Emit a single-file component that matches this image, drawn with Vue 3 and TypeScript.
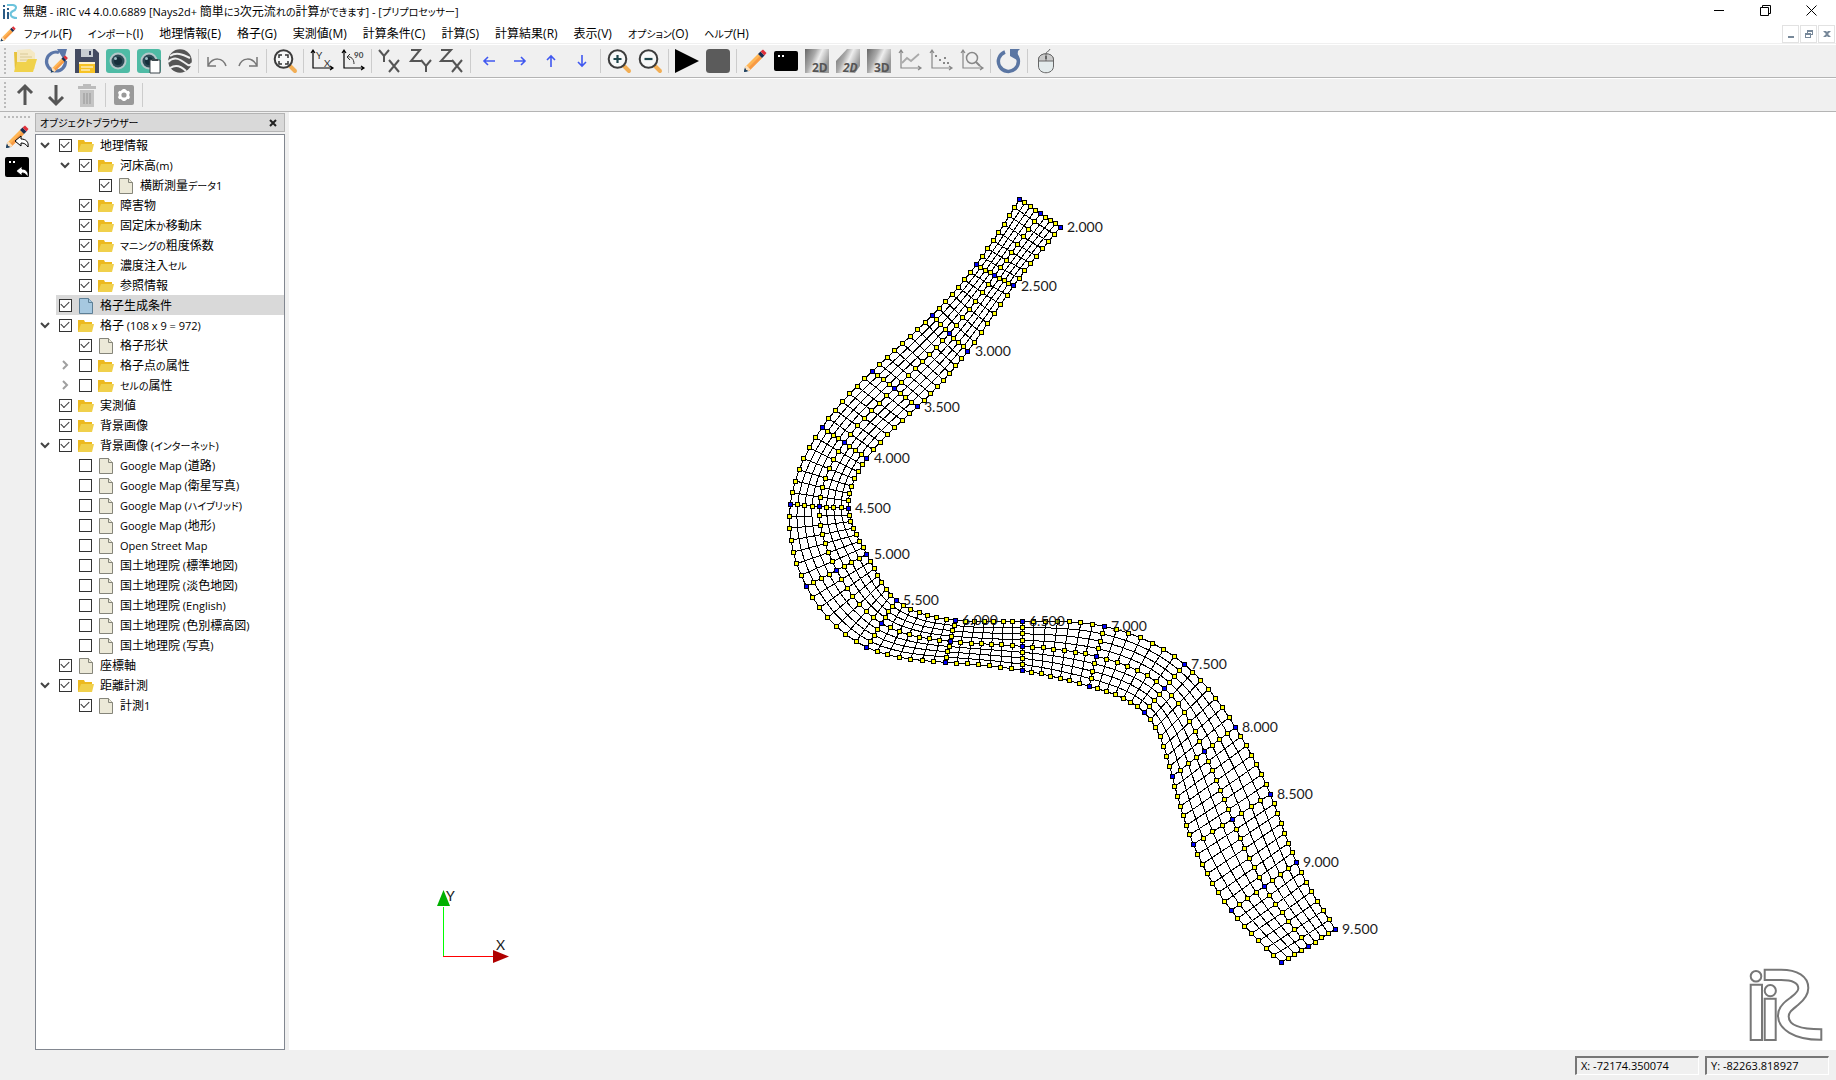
<script setup lang="ts">
import { h, ref } from 'vue'

type Point = [number, number]

interface ToolItem {
  icon: string
  label: string
  disabled?: boolean
}

interface TreeNode {
  label: string
  level: number
  icon: 'folder' | 'file' | 'blue'
  checked: boolean
  expand?: 'open' | 'closed'
  selected?: boolean
}

// Interface text: kana and Latin runs are set smaller than the kanji around them.
const UiText = (props: { text: string }) =>
  h('span', { class: 'ui-text' }, (props.text.match(/[\u3040-\u30ff]+|[\u0000-\u00ff]+|[^\u0000-\u00ff\u3040-\u30ff]+/g) ?? []).map((run) => {
    const kind = /^[\u3040-\u30ff]/.test(run) ? 'kana' : /^[\u0000-\u00ff]/.test(run) ? 'latin' : 'kanji'
    return h('span', { class: kind }, run)
  }))
UiText.props = ['text']

const menus = [
  'ファイル(F)', 'インポート(I)', '地理情報(E)', '格子(G)', '実測値(M)', '計算条件(C)',
  '計算(S)', '計算結果(R)', '表示(V)', 'オプション(O)', 'ヘルプ(H)',
]

const pencil =
  '<path d="M1 23 2 18 6 22Z" fill="#1d3f5e"/><path d="M2 18 15 5 19 9 6 22Z" fill="#ffb655"/><path d="M4 20 17 7 19 9 6 22Z" fill="#f79a45"/><path d="M2 18 3.500 16.500 7.500 20.500 6 22 3 21Z" fill="#fbe0bd"/><path d="M1 23 1.800 19.600 4.400 22.200Z" fill="#1d3f5e"/><path d="M15 5 17.500 2.500 21.500 6.500 19 9Z" fill="#1c2e50"/><path d="M17.500 2.500 20 .5 23.500 4 21.500 6.500Z" fill="#e0303a"/>'
const lens =
  '<path d="M16 16 22 22" stroke="#f2ae55" stroke-width="4" stroke-linecap="round"/><circle cx="10.500" cy="10" r="8.800" fill="#f7f8f8" stroke="#3c3c3c" stroke-width="2"/>'
const axes =
  '<path d="M3 2V19H22M1 4 3 1 5 4M20 17 23 19 20 21" fill="none" stroke="currentColor" stroke-width="1.200"/>'
const metal =
  '<linearGradient id="metal" x1="0" y1="0" x2="1" y2=".45"><stop offset="0" stop-color="#666"/><stop offset=".4" stop-color="#aaa"/><stop offset=".62" stop-color="#eee"/><stop offset="1" stop-color="#999"/></linearGradient>'
const iconText = 'font-family="Open Sans, sans-serif" font-weight="700" font-size="12" fill="#555"'
const camera =
  '<rect width="24" height="24" rx="3" fill="#4fbba5"/><circle cx="12" cy="12" r="8.500" fill="#b6c8ca"/><circle cx="12" cy="12" r="6.500" fill="#2d4a55"/><circle cx="12" cy="12" r="4" fill="#172f3b"/><circle cx="9.500" cy="9.500" r="1.500" fill="#9fc0c6"/>'

const icons: Record<string, string> = {
  open: '<path d="M1 3H9V23H2Z" fill="#e8c33c"/><path d="M4 1 17 0 22 4V20H4Z" fill="#f5e9c4"/><path d="M7 5H15M7 8H19M7 11H19" stroke="#d9ca98"/><path d="M1 23 4 13H13L15 10H24L20 23Z" fill="#f0d24c"/>',
  reload:
    '<path d="M15 3.500A9.500 9.500 0 1 0 21.500 12" fill="none" stroke="#5b76a8" stroke-width="3.200"/><path d="M13 0H23L20 11Z" fill="#5b76a8"/><g transform="translate(6 6) scale(.76)">' + pencil + '</g>',
  save: '<path d="M0 0H20L24 4V24H0Z" fill="#444b61"/><path d="M6 0H18V8H6Z" fill="#c9ced3"/><path d="M14 2H16V6H14Z" fill="#39415a"/><path d="M4 13H20V24H4Z" fill="#f7c325"/><path d="M4 13H20V15H4Z" fill="#fff3ce"/><path d="M6 18H18M6 21H15" stroke="#fff"/>',
  camera,
  paste: camera + '<path d="M13 11H23V24H13Z" fill="#fff" stroke="#3c474c"/><path d="M15 10H21V12H15Z" fill="#3c474c"/>',
  earth:
    '<circle cx="12" cy="12" r="11.800" fill="#555"/><path d="M2 7C8 3 14 5 22 9M0 13C7 6 13 11 20 16 22 17 23 16 24 14M2 19C8 15 13 17 18 22" fill="none" stroke="#f0f0f0" stroke-width="2"/>',
  undo: '<path d="M3 8V17H11M3.500 16C8 8 18 8 21 17" fill="none" stroke="#777" stroke-width="1.500"/>',
  redo: '<path d="M21 8V17H13M20.500 16C16 8 6 8 3 17" fill="none" stroke="#777" stroke-width="1.500"/>',
  fit: lens + '<path d="M6 9V6H9M12 6H15V9M15 12V15H12M9 15H6V12" fill="none" stroke="#333" stroke-width="1.500"/>',
  axisxy: axes + '<text x="6" y="10" font-family="Lato, sans-serif" font-size="10" fill="#333">Y</text><text x="14" y="18" font-family="Lato, sans-serif" font-size="10" fill="#333">X</text>',
  rotate: axes + '<path d="M6 8C10 7 13 10 13 15M9 5 6 8 9 11" fill="none" stroke="#333"/><text x="13" y="9" font-family="Lato, sans-serif" font-size="8" font-weight="700" fill="#444">90</text>',
  yx: '<path d="M1 1 6 7 11 1M6 7V13M11 11 21 23M21 11 11 23" fill="none" stroke="#555" stroke-width="2"/>',
  zy: '<path d="M2 1H11L2 12H12M12 11 17 17 22 11M17 17V23" fill="none" stroke="#555" stroke-width="2"/>',
  zx: '<path d="M1 1H11L1 12H12M12 11 22 23M22 11 12 23" fill="none" stroke="#555" stroke-width="2"/>',
  left: '<path d="M18 12H7M11 8 7 12 11 16" fill="none" stroke="#4058f0" stroke-width="1.600"/>',
  right: '<path d="M6 12H17M13 8 17 12 13 16" fill="none" stroke="#4058f0" stroke-width="1.600"/>',
  up: '<path d="M12 18V7M8 11 12 7 16 11" fill="none" stroke="#4058f0" stroke-width="1.600"/>',
  down: '<path d="M12 6V17M8 13 12 17 16 13" fill="none" stroke="#4058f0" stroke-width="1.600"/>',
  zoomin: lens + '<path d="M10.500 6V14M6.500 10H14.500" stroke="#1f464c" stroke-width="2.200"/>',
  zoomout: lens + '<path d="M6.500 10H14.500" stroke="#1f464c" stroke-width="2.200"/>',
  play: '<path d="M0 0 24 12 0 24Z"/>',
  stop: '<rect width="24" height="24" rx="3.500" fill="#5b5b5b"/>',
  pencil,
  console: '<rect y="2" width="24" height="20" rx="2"/><path d="M4 6H6V8H4ZM8 6H10V8H8Z" fill="#fff"/>',
  flat: metal + '<path d="M0 0H24V24H0Z" fill="url(#metal)"/><text x="7" y="23" ' + iconText + '>2D</text>',
  skew: metal + '<path d="M11 0H24V17L19 24H0V12Z" fill="url(#metal)"/><text x="7" y="23" font-style="italic" ' + iconText + '>2D</text>',
  solid: metal + '<path d="M0 0H24V24H0Z" fill="url(#metal)"/><text x="7" y="23" ' + iconText + '>3D</text>',
  chart: '<g color="#888">' + axes + '</g><path d="M4 14 9 9 13 12 21 5" fill="none" stroke="#aaa" stroke-width="1.800"/>',
  scatter: '<g color="#888">' + axes + '</g><path d="M6 6H8V8H6ZM10 10H12V12H10ZM15 8H17V10H15ZM14 13H16V15H14ZM18 13H20V15H18Z" fill="#888"/>',
  search: '<g color="#888">' + axes + '</g><circle cx="12" cy="9" r="5.500" fill="none" stroke="#888" stroke-width="1.500"/><path d="M16 13 20 17" stroke="#888" stroke-width="2"/>',
  refresh: '<path d="M17.500 4.500A10 10 0 1 1 8 3" fill="none" stroke="#5b76a3" stroke-width="3.500"/><path d="M13 0H23L21 2 20 11 13 7Z" fill="#5b76a3"/>',
  mouse: '<path d="M12 5C12 2 15 3 16 0M4.500 11C4.500 3 19.500 3 19.500 11V17C19.500 26 4.500 26 4.500 17Z" fill="#e3ebec" stroke="#666"/><path d="M4.500 12V10C5 3 19 3 19.500 10V12Z" fill="#c9c9c9" stroke="#666"/><path d="M12 5V12" stroke="#666"/><path d="M11 7H13V10H11Z" fill="#666"/>',
  moveup: '<path d="M12 22V4M5 10 12 3 19 10" fill="none" stroke="#555" stroke-width="3"/>',
  movedown: '<path d="M12 2V20M5 14 12 21 19 14" fill="none" stroke="#555" stroke-width="3"/>',
  trash: '<path d="M3 3H21V6H3Z" fill="#bcbcbc"/><path d="M8 1H16V3H8Z" fill="#bcbcbc"/><path d="M5 7H19V24H5Z" fill="#c4c4c4"/><path d="M9 10V21M12 10V21M15 10V21" stroke="#a4a4a4" stroke-width="1.500"/>',
  gear: '<rect x="2" y="2" width="20" height="20" rx="2" fill="#999"/><circle cx="12" cy="12" r="4" fill="none" stroke="#fff" stroke-width="2.800"/><path d="M12 6V8M12 16V18M6.500 9 8.500 10M15.500 14 17.500 15M6.500 15 8.500 14M15.500 10 17.500 9" stroke="#fff" stroke-width="3"/>',
  pencilback: pencil + '<path d="M10 16 16 11V14C21 14 24 17 23 22 21 19 19 18 16 18V21Z" fill="#fff" stroke="#000"/>',
  consoleback: '<rect y="2" width="24" height="20" rx="2"/><path d="M4 6H6V8H4ZM8 6H10V8H8Z" fill="#fff"/><path d="M11 16 17 11V14C21 14 24 17 23 22 21 19 19 18 17 18V21Z" fill="#fff" stroke="#000"/>',
}

const mainTools: ToolItem[][] = [
  [
    { icon: 'open', label: '開く' }, { icon: 'reload', label: '再読み込み' }, { icon: 'save', label: '保存' },
    { icon: 'camera', label: 'スナップショット' }, { icon: 'paste', label: 'コピー' }, { icon: 'earth', label: 'Google Earth' },
  ],
  [{ icon: 'undo', label: '元に戻す' }, { icon: 'redo', label: 'やり直し' }],
  [{ icon: 'fit', label: '全体表示' }],
  [{ icon: 'axisxy', label: '回転リセット' }, { icon: 'rotate', label: '90度回転' }],
  [{ icon: 'yx', label: 'XY平面' }, { icon: 'zy', label: 'YZ平面' }, { icon: 'zx', label: 'XZ平面' }],
  [{ icon: 'left', label: '左' }, { icon: 'right', label: '右' }, { icon: 'up', label: '上' }, { icon: 'down', label: '下' }],
  [{ icon: 'zoomin', label: '拡大' }, { icon: 'zoomout', label: '縮小' }],
  [{ icon: 'play', label: '実行' }, { icon: 'stop', label: '停止' }],
  [
    { icon: 'pencil', label: 'プリプロセッサー' }, { icon: 'console', label: 'ソルバーコンソール' },
    { icon: 'flat', label: '2D' }, { icon: 'skew', label: '2D鳥瞰図' }, { icon: 'solid', label: '3D' },
    { icon: 'chart', label: 'グラフ' }, { icon: 'scatter', label: '散布図' }, { icon: 'search', label: '検証' },
  ],
  [{ icon: 'refresh', label: '更新' }],
  [{ icon: 'mouse', label: 'マウス操作' }],
]
const editTools: ToolItem[][] = [
  [{ icon: 'moveup', label: '上へ' }, { icon: 'movedown', label: '下へ' }, { icon: 'trash', label: '削除', disabled: true }],
  [{ icon: 'gear', label: 'プロパティ', disabled: true }],
  [],
]
const sideTools: ToolItem[] = [
  { icon: 'pencilback', label: 'プリプロセッサー' },
  { icon: 'consoleback', label: 'ソルバーコンソール' },
]

const n = (
  label: string, level: number, icon: TreeNode['icon'], checked: boolean,
  expand?: TreeNode['expand'], selected = false,
): TreeNode => ({ label, level, icon, checked, expand, selected })

const tree = ref<TreeNode[]>([
  n('地理情報', 0, 'folder', true, 'open'),
  n('河床高(m)', 1, 'folder', true, 'open'),
  n('横断測量データ1', 2, 'file', true),
  n('障害物', 1, 'folder', true),
  n('固定床か移動床', 1, 'folder', true),
  n('マニングの粗度係数', 1, 'folder', true),
  n('濃度注入セル', 1, 'folder', true),
  n('参照情報', 1, 'folder', true),
  n('格子生成条件', 0, 'blue', true, undefined, true),
  n('格子 (108 x 9 = 972)', 0, 'folder', true, 'open'),
  n('格子形状', 1, 'file', true),
  n('格子点の属性', 1, 'folder', false, 'closed'),
  n('セルの属性', 1, 'folder', false, 'closed'),
  n('実測値', 0, 'folder', true),
  n('背景画像', 0, 'folder', true),
  n('背景画像 (インターネット)', 0, 'folder', true, 'open'),
  n('Google Map (道路)', 1, 'file', false),
  n('Google Map (衛星写真)', 1, 'file', false),
  n('Google Map (ハイブリッド)', 1, 'file', false),
  n('Google Map (地形)', 1, 'file', false),
  n('Open Street Map', 1, 'file', false),
  n('国土地理院 (標準地図)', 1, 'file', false),
  n('国土地理院 (淡色地図)', 1, 'file', false),
  n('国土地理院 (English)', 1, 'file', false),
  n('国土地理院 (色別標高図)', 1, 'file', false),
  n('国土地理院 (写真)', 1, 'file', false),
  n('座標軸', 0, 'file', true),
  n('距離計測', 0, 'folder', true, 'open'),
  n('計測1', 1, 'file', true),
])

// Surveyed cross sections: left bank, channel centre, right bank.
const sections: { name: string; pts: [Point, Point, Point] }[] = [
  { name: '2.000', pts: [[1019.7, 199.3], [1040.3, 213.7], [1060.3, 227.3]] },
  { name: '2.500', pts: [[976.3, 264.7], [994.7, 275.7], [1013.7, 285.7]] },
  { name: '3.000', pts: [[932.3, 315.3], [949.3, 333.7], [967.7, 351.3]] },
  { name: '3.500', pts: [[872.4, 371.2], [894.6, 388.7], [917.3, 406.7]] },
  { name: '4.000', pts: [[822.3, 427.3], [844.3, 442.7], [866.7, 458.3]] },
  { name: '4.500', pts: [[790.3, 504.3], [819.3, 506.7], [848.3, 508.3]] },
  { name: '5.000', pts: [[806.3, 586.3], [836.7, 570.3], [866.7, 554.3]] },
  { name: '5.500', pts: [[866.7, 647.3], [881.3, 623.3], [896.3, 600.3]] },
  { name: '6.000', pts: [[945.3, 662.3], [950.3, 641.3], [955.3, 620.3]] },
  { name: '6.500', pts: [[1022.3, 670.3], [1022.3, 646.3], [1022.3, 621.3]] },
  { name: '7.000', pts: [[1089.3, 686.3], [1096.3, 656.3], [1104.3, 626.3]] },
  { name: '7.500', pts: [[1144.3, 712.3], [1164.3, 688.3], [1184.3, 664.3]] },
  { name: '8.000', pts: [[1172.3, 776.3], [1204.3, 751.3], [1235.3, 727.3]] },
  { name: '8.500', pts: [[1193.3, 844.3], [1232.3, 819.3], [1270.3, 794.3]] },
  { name: '9.000', pts: [[1231.3, 910.3], [1264.3, 886.3], [1296.3, 862.3]] },
  { name: '9.500', pts: [[1281.3, 962.3], [1308.3, 946.3], [1335.3, 929.3]] },
]
const divisions = sections.slice(1).map((_, i) => (i === 0 || i === 2 ? 8 : 7))

// Second derivatives of the natural cubic spline through (t, v).
function splineMoments(t: number[], v: number[]): number[] {
  const size = t.length
  const m = new Array<number>(size).fill(0)
  const c = new Array<number>(size).fill(0)
  for (let i = 1; i < size - 1; i++) {
    const h0 = t[i] - t[i - 1]
    const h1 = t[i + 1] - t[i]
    const p = 2 * (h0 + h1) - h0 * c[i - 1]
    const d = 6 * ((v[i + 1] - v[i]) / h1 - (v[i] - v[i - 1]) / h0)
    c[i] = h1 / p
    m[i] = (d - h0 * m[i - 1]) / p
  }
  for (let i = size - 2; i > 0; i--) m[i] -= c[i] * m[i + 1]
  return m
}

function traceLine(side: number): Point[] {
  const pts = sections.map((s) => s.pts[side])
  const t = [0]
  for (let i = 1; i < pts.length; i++) {
    t.push(t[i - 1] + Math.hypot(pts[i][0] - pts[i - 1][0], pts[i][1] - pts[i - 1][1]))
  }
  const values = [pts.map((p) => p[0]), pts.map((p) => p[1])]
  const moments = values.map((v) => splineMoments(t, v))
  const evaluate = (axis: number, i: number, u: number): number => {
    const step = t[i + 1] - t[i]
    const w = 1 - u
    const v = values[axis]
    const m = moments[axis]
    return w * v[i] + u * v[i + 1] + ((w ** 3 - w) * m[i] + (u ** 3 - u) * m[i + 1]) * step * step / 6
  }
  const out: Point[] = [pts[0]]
  divisions.forEach((count, i) => {
    for (let k = 1; k <= count; k++) out.push([evaluate(0, i, k / count), evaluate(1, i, k / count)])
  })
  return out
}

const mix = (a: Point, b: Point, u: number): Point => [a[0] + (b[0] - a[0]) * u, a[1] + (b[1] - a[1]) * u]
const [leftBank, centre, rightBank] = [0, 1, 2].map(traceLine)
const grid: Point[][] = leftBank.map((l, i) =>
  Array.from({ length: 9 }, (_, j) =>
    j < 4 ? mix(l, centre[i], j / 4) : mix(centre[i], rightBank[i], (j - 4) / 4),
  ),
)

const toPath = (pts: Point[]): string => 'M' + pts.map((p) => p[0].toFixed(1) + ' ' + p[1].toFixed(1)).join('L')
const gridPath = grid.map(toPath).join('') + Array.from({ length: 9 }, (_, j) => toPath(grid.map((r) => r[j]))).join('')

const stations = new Set<number>([0])
divisions.reduce((sum, d) => {
  stations.add(sum + d)
  return sum + d
}, 0)

const square = (p: Point, half: number): string => {
  const x = Math.floor(p[0]) - half
  const y = Math.floor(p[1]) - half
  const s = half * 2 + 1
  return `M${x} ${y}h${s}v${s}h-${s}z`
}
const minor: Point[] = []
const major: Point[] = []
grid.forEach((row, i) =>
  row.forEach((p, j) => {
    const onLine = j % 4 === 0
    if (stations.has(i) && onLine) major.push(p)
    else if (stations.has(i) || onLine) minor.push(p)
  }),
)
const frames = [...minor, ...major].map((p) => square(p, 2)).join('')
const minorFill = minor.map((p) => square(p, 1)).join('')
const majorFill = major.map((p) => square(p, 1)).join('')
</script>

<template>
  <div class="app">
    <header class="titlebar">
      <svg class="app-logo" viewBox="0 0 16 16" aria-hidden="true">
        <path d="M1 5H3V15H1ZM5 8H7V15H5ZM1 1H3V3H1ZM5 4H7V6H5Z" fill="#2b5c86" />
        <path d="M5 1H11C16 2 14 6 11 7 7 9 8 14 15 14" fill="none" stroke="#6cc3dc" stroke-width="2" />
      </svg>
      <h1><UiText text="無題 - iRIC v4 4.0.0.6889 [Nays2d+ 簡単に3次元流れの計算ができます] - [プリプロセッサー]" /></h1>
      <div class="window-buttons">
        <button type="button" aria-label="最小化"><svg viewBox="0 0 11 11"><path d="M0 5.500H10" /></svg></button>
        <button type="button" aria-label="元に戻す"><svg viewBox="0 0 11 11"><path d="M.5 2.500H8.500V10.500H.5ZM2.500 2.500V.5H10.500V8.500H8.500" /></svg></button>
        <button type="button" aria-label="閉じる"><svg viewBox="0 0 11 11"><path d="M.5 .5 10.500 10.500M10.500 .5 .5 10.500" /></svg></button>
      </div>
    </header>

    <nav class="menubar">
      <svg class="menu-icon" viewBox="0 0 24 24" aria-hidden="true" v-html="pencil" />
      <button v-for="m in menus" :key="m" type="button" class="menu"><UiText :text="m" /></button>
      <div class="mdi-buttons">
        <button type="button" aria-label="子ウィンドウを最小化"><svg viewBox="0 0 8 8"><path d="M1 6H7V8H1Z" /></svg></button>
        <button type="button" aria-label="子ウィンドウを元に戻す"><svg viewBox="0 0 8 8"><path d="M2 0H8V5H6V4H7V2H3V3H2ZM0 3H6V8H0ZM1 5V7H5V5Z" fill-rule="evenodd" /></svg></button>
        <button type="button" aria-label="子ウィンドウを閉じる"><svg viewBox="0 0 8 8"><path d="M0 1H3L4 2 5 1H8L5 4 8 7H5L4 6 3 7H0L3 4Z" /></svg></button>
      </div>
    </nav>

    <div v-for="(groups, r) in [mainTools, editTools]" :key="r" class="toolbar" role="toolbar">
      <span class="grip" />
      <template v-for="(group, g) in groups" :key="g">
        <span v-if="g > 0" class="separator" />
        <button v-for="t in group" :key="t.icon" type="button" class="tool" :title="t.label" :aria-label="t.label" :disabled="t.disabled">
          <svg viewBox="0 0 24 24" v-html="icons[t.icon]" />
        </button>
      </template>
    </div>

    <main class="workspace">
      <aside class="side-tools">
        <span class="grip-h" />
        <button v-for="t in sideTools" :key="t.icon" type="button" class="tool" :title="t.label" :aria-label="t.label">
          <svg viewBox="0 0 24 24" v-html="icons[t.icon]" />
        </button>
      </aside>

      <section class="dock">
        <div class="dock-title">
          <h2><UiText text="オブジェクトブラウザー" /></h2>
          <button type="button" aria-label="閉じる"><svg viewBox="0 0 8 8"><path d="M1 1 7 7M7 1 1 7" /></svg></button>
        </div>
        <ul class="tree">
          <li v-for="(node, i) in tree" :key="i" :class="{ selected: node.selected }">
            <span v-for="k in node.level" :key="k" class="indent" />
            <span class="indent" :class="node.expand">
              <svg v-if="node.expand" viewBox="0 0 10 10"><path :d="node.expand === 'open' ? 'M1 3 5 7 9 3' : 'M3 1 7 5 3 9'" /></svg>
            </span>
            <label>
              <input v-model="node.checked" type="checkbox">
              <svg v-if="node.icon === 'folder'" class="node-icon" viewBox="0 0 16 16">
                <path d="M0 2H6L7 4H14V14H0Z" fill="#ecb91f" />
                <path d="M0 14 3 6H16L14 14Z" fill="#f0d04c" />
              </svg>
              <svg v-else class="node-icon" :class="node.icon" viewBox="0 0 16 16">
                <path d="M1.500 .5H10.500L14.500 4.500V15.500H1.500Z" /><path d="M10.500 .5V4.500H14.500" />
              </svg>
              <UiText :text="node.label" />
            </label>
          </li>
        </ul>
      </section>

      <section class="view">
        <svg class="mesh" viewBox="289 112 1547 938">
          <path class="lines" :d="gridPath" />
          <path :d="frames" class="crisp" />
          <path :d="minorFill" class="crisp" fill="#ff0" />
          <path :d="majorFill" class="crisp" fill="#00f" />
          <text v-for="s in sections" :key="s.name" :x="Math.round(s.pts[2][0]) + 7" :y="Math.round(s.pts[2][1]) + 5">{{ s.name }}</text>
        </svg>
        <svg class="axes" viewBox="0 0 90 90">
          <path d="M14.500 27V76" stroke="#0f0" />
          <path d="M14 76.500H65" stroke="#f00" />
          <path d="M14.500 10 21 26H8Z" fill="#00b000" />
          <path d="M80 76.500 64 70V83Z" fill="#b00000" />
          <text x="17" y="21">Y</text>
          <text x="67" y="70">X</text>
        </svg>
        <svg class="watermark" viewBox="0 0 76 76">
          <circle cx="8" cy="9.300" r="5.300" />
          <circle cx="22.300" cy="23.700" r="5.600" />
          <path d="M2.700 17.700H14V73H2.700ZM16.700 31.700H27.700V73H16.700Z" />
          <path d="M16.700 2.700H33C49 2.700 60.300 9 60.300 21C60.300 29 55 34 50 38C44 43 40.700 45 40.700 49.500C40.700 58 52 62.300 73.300 62.300V72.700C46 73 30 62 30 48.500C30 40 36 35 42 31C47 27 50.300 25 50.300 21.500C50.300 15 43 13 33 13H16.700Z" />
        </svg>
      </section>
    </main>

    <footer class="statusbar">
      <output><UiText text="X: -72174.350074" /></output>
      <output><UiText text="Y: -82263.818927" /></output>
    </footer>
  </div>
</template>

<style>
body {
  margin: 0;
  overflow: hidden;
}
</style>

<style scoped>
.app {
  display: flex;
  flex-direction: column;
  height: 100vh;
  background: #f0f0f0;
  color: #000;
  font: 12px/18px "Open Sans", "Noto Sans CJK JP", sans-serif;
  font-feature-settings: "palt";
}
:deep(.ui-text) {
  white-space: pre;
}
:deep(.latin) {
  font-size: 11px;
}
:deep(.kana) {
  font-size: 10px;
}
button {
  display: flex;
  align-items: center;
  justify-content: center;
  padding: 0;
  border: 0;
  background: none;
  color: inherit;
  font: inherit;
  font-feature-settings: inherit;
}
h1,
h2 {
  margin: 0;
  font: inherit;
  font-feature-settings: inherit;
  white-space: nowrap;
}
.titlebar {
  display: flex;
  align-items: flex-start;
  height: 24px;
  background: #fff;
}
.app-logo {
  width: 16px;
  height: 16px;
  margin: 4px 5px 0 2px;
}
h1 {
  padding-top: 3px;
}
.window-buttons {
  display: flex;
  margin-left: auto;
  padding-right: 2px;
}
.window-buttons button {
  width: 46px;
  height: 20px;
}
.window-buttons svg {
  width: 11px;
  height: 11px;
  fill: none;
  stroke: #000;
}
.menubar {
  display: flex;
  align-items: center;
  height: 19px;
  background: #fff;
  border-bottom: 1px solid #f0f0f0;
}
.menu-icon {
  width: 16px;
  height: 16px;
}
.menu {
  padding: 0 8px;
  white-space: nowrap;
}
.menu :deep(.latin) {
  font-size: 12px;
}
.mdi-buttons {
  display: flex;
  gap: 1px;
  margin-left: auto;
  padding-right: 1px;
}
.mdi-buttons button {
  box-sizing: border-box;
  width: 17px;
  height: 18px;
  border: 1px solid #e2e2e2;
}
.mdi-buttons svg {
  width: 8px;
  height: 8px;
  fill: #778899;
}
.toolbar {
  display: flex;
  align-items: center;
  gap: 1px;
  height: 32px;
  border-top: 1px solid #fff;
  border-bottom: 1px solid #b4b4b4;
}
.grip {
  width: 2px;
  height: 26px;
  margin: 0 3px 0 4px;
  background: repeating-linear-gradient(#bbb 0 2px, transparent 2px 4px);
}
.separator {
  width: 1px;
  height: 24px;
  margin: 0 2px;
  background: #ccc;
}
.tool {
  width: 30px;
  height: 30px;
}
.tool svg {
  width: 24px;
  height: 24px;
  overflow: visible;
}
.workspace {
  display: flex;
  flex: 1;
  min-height: 0;
}
.side-tools {
  width: 33px;
  padding: 4px 0 0 2px;
}
.grip-h {
  display: block;
  width: 26px;
  height: 2px;
  margin: 0 2px 4px;
  background: repeating-linear-gradient(90deg, #bbb 0 2px, transparent 2px 4px);
}
.dock {
  display: flex;
  flex-direction: column;
  width: 250px;
  padding: 1px 4px 0 0;
}
.dock-title {
  display: flex;
  align-items: center;
  justify-content: space-between;
  box-sizing: border-box;
  height: 19px;
  padding: 0 7px 0 4px;
  border: 1px solid #b4b4b4;
  background: #d9d9d9;
}
.dock-title svg {
  width: 8px;
  height: 8px;
  stroke: #222;
  stroke-width: 2;
}
.tree {
  flex: 1;
  margin: 2px 0 0;
  padding: 0;
  border: 1px solid #828790;
  background: #fff;
  list-style: none;
}
.tree li {
  display: flex;
  align-items: center;
  height: 20px;
}
.indent {
  display: flex;
  align-items: center;
  flex: none;
  width: 20px;
  height: 20px;
}
.indent svg {
  width: 10px;
  height: 10px;
  margin-left: 4px;
  fill: none;
  stroke: #444;
  stroke-width: 2;
}
.indent.closed svg {
  stroke: #a0a0a0;
}
label {
  display: flex;
  flex: 1;
  align-items: center;
  box-sizing: border-box;
  height: 20px;
  padding: 1px 0 0 3px;
  white-space: nowrap;
}
.selected label {
  background: #d9d9d9;
}
input {
  position: relative;
  box-sizing: border-box;
  width: 13px;
  height: 13px;
  margin: 0;
  border: 1px solid #333;
  background: #fff;
  appearance: none;
}
input:checked::after {
  position: absolute;
  top: 1px;
  left: 1px;
  width: 7px;
  height: 4px;
  border: solid #333;
  border-width: 0 0 1px 1px;
  content: "";
  transform: rotate(-45deg);
}
.node-icon {
  width: 16px;
  height: 16px;
  margin: 0 6px;
}
.node-icon.file,
.node-icon.blue {
  fill: #ece9d8;
  stroke: #85857a;
}
.node-icon.blue {
  fill: #a6c8e0;
  stroke: #5d7f96;
}
.view {
  position: relative;
  flex: 1;
  min-width: 0;
  background: #fff;
}
.mesh {
  display: block;
  width: 100%;
  height: 100%;
}
.lines {
  fill: none;
  stroke: #000;
  shape-rendering: crispEdges;
}
.crisp {
  shape-rendering: crispEdges;
}
.mesh text,
.axes text {
  fill: #1a1a1a;
  font: 14px Lato, sans-serif;
}
.axes {
  position: absolute;
  bottom: 80px;
  left: 140px;
  width: 90px;
  height: 90px;
}
.watermark {
  position: absolute;
  right: 12px;
  bottom: 7px;
  width: 76px;
  height: 76px;
  fill: none;
  stroke: #777;
  stroke-width: 2;
}
.statusbar {
  display: flex;
  align-items: center;
  justify-content: flex-end;
  gap: 6px;
  height: 30px;
  padding-right: 7px;
}
output {
  box-sizing: border-box;
  width: 124px;
  height: 19px;
  padding-left: 4px;
  border: 1px solid #fff;
  border-top: 2px solid #777;
  border-left: 2px solid #777;
  line-height: 16px;
}
</style>
